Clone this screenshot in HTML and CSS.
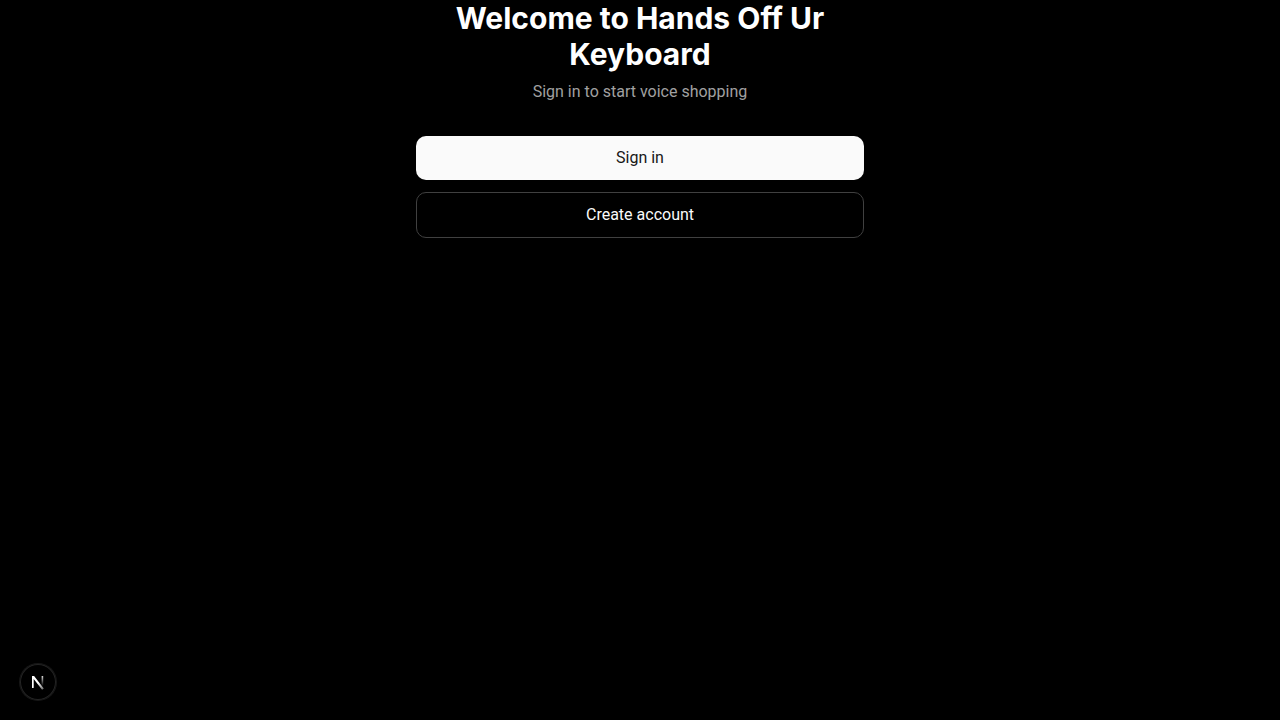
FILE: index.html
```
<!DOCTYPE html>
<html lang="en">
<head>
<meta charset="utf-8">
<title>Hands Off Ur Keyboard</title>
<link rel="stylesheet" href="styles.css">
</head>
<body>
<main class="welcome">
  <header class="intro">
    <h1 class="title">Welcome to Hands Off Ur Keyboard</h1>
    <p class="subtitle">Sign in to start voice shopping</p>
  </header>
  <div class="actions">
    <button type="button" class="button primary">Sign in</button>
    <button type="button" class="button outline">Create account</button>
  </div>
</main>
<button type="button" class="dev-badge" aria-label="Open developer tools">
  <svg class="dev-mark" viewBox="0 0 36 36" fill="none" aria-hidden="true">
    <defs>
      <linearGradient id="diagonal" x1="18" y1="19" x2="24" y2="27" gradientUnits="userSpaceOnUse"><stop stop-color="#fff"/><stop offset="1" stop-color="#fff" stop-opacity="0.3"/></linearGradient>
      <linearGradient id="stem" x1="22" y1="12" x2="22" y2="22" gradientUnits="userSpaceOnUse"><stop stop-color="#fff" stop-opacity="0.85"/><stop offset="1" stop-color="#fff" stop-opacity="0"/></linearGradient>
    </defs>
    <path d="M12 12h2.1l9.7 12.5-1.7 1.3-8.4-10.9V24H12z" fill="url(#diagonal)"/>
    <path d="M21.6 12h1.6V22h-1.6z" fill="url(#stem)"/>
  </svg>
</button>
</body>
</html>
```
FILE: styles.css
```
* {
  box-sizing: border-box;
}

body {
  margin: 0;
  min-height: 100vh;
  background: #000;
  color: #fafafa;
  font-family: Roboto, "Liberation Sans", sans-serif;
}

.welcome {
  display: flex;
  flex-direction: column;
  gap: 32px;
  max-width: 448px;
  margin: 0 auto;
}

.intro {
  display: flex;
  flex-direction: column;
  gap: 8px;
  text-align: center;
}

.title {
  margin: 0;
  color: #fff;
  font-family: Inter, "Liberation Sans", sans-serif;
  font-size: 30px;
  line-height: 36px;
  font-weight: 700;
  font-variant-ligatures: none;
}

.subtitle {
  margin: 0;
  color: #a1a1a1;
  font-size: 16px;
  line-height: 24px;
}

.actions {
  display: flex;
  flex-direction: column;
  gap: 12px;
}

.button {
  padding: 10px 16px;
  border: 0;
  border-radius: 10px;
  font: inherit;
  font-size: 16px;
  line-height: 24px;
  cursor: pointer;
}

.primary {
  background: #fafafa;
  color: #171717;
}

.outline {
  border: 1px solid #404040;
  background: #000;
  color: #fafafa;
}

.dev-badge {
  position: fixed;
  bottom: 20px;
  left: 20px;
  display: grid;
  place-items: center;
  width: 36px;
  height: 36px;
  padding: 0;
  border: 0;
  border-radius: 50%;
  background: #000;
  box-shadow: 0 0 0 1px #171717, inset 0 0 0 1px #242424;
}

.dev-mark {
  width: 36px;
  height: 36px;
}
```
